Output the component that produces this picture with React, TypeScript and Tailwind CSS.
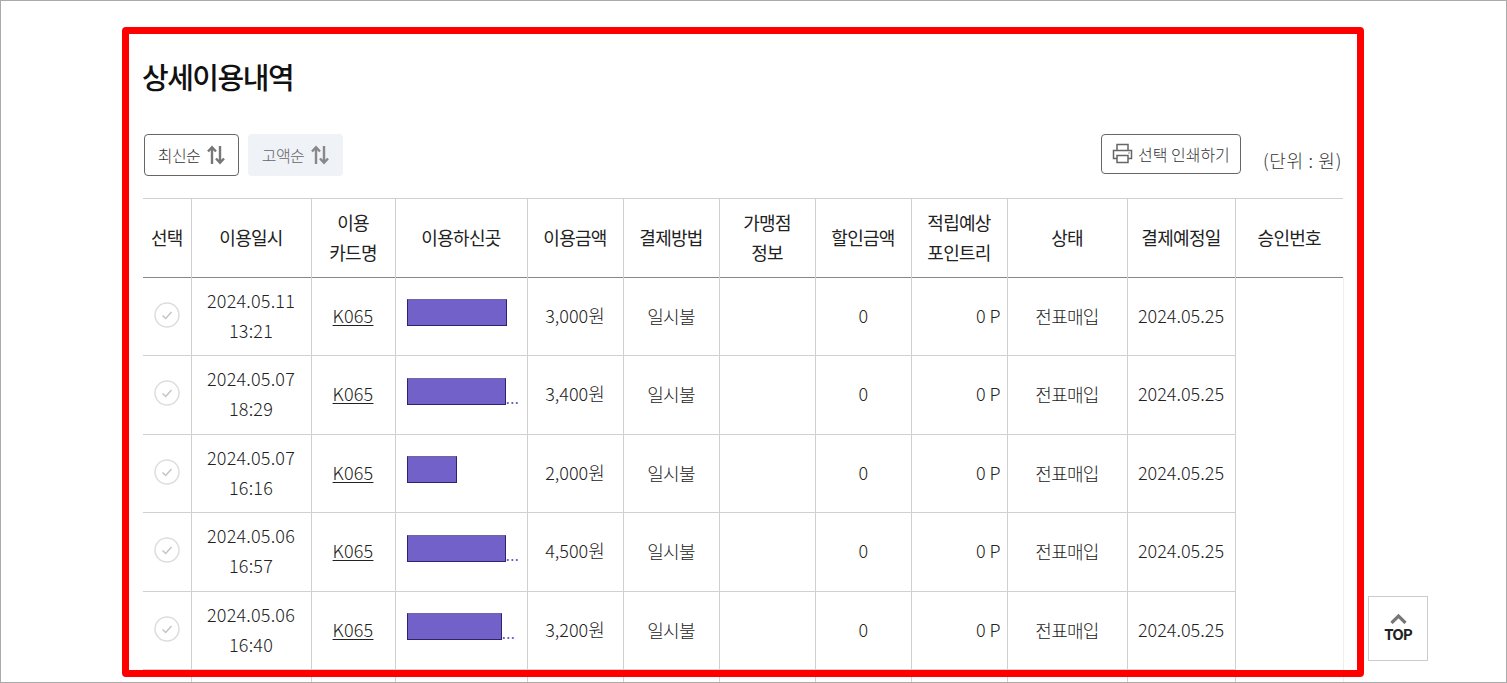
const FONT = '"Noto Sans CJK KR", "Noto Sans", sans-serif';

const columns = [48, 120, 84, 132, 96, 96, 96, 96, 96, 120, 108, 108];

const headers: string[][] = [
  ["선택"],
  ["이용일시"],
  ["이용", "카드명"],
  ["이용하신곳"],
  ["이용금액"],
  ["결제방법"],
  ["가맹점", "정보"],
  ["할인금액"],
  ["적립예상", "포인트리"],
  ["상태"],
  ["결제예정일"],
  ["승인번호"],
];

const rows = [
  { date: "2024.05.11", time: "13:21", bar: 100, dots: false, amount: "3,000원", h: "h-[78px]" },
  { date: "2024.05.07", time: "18:29", bar: 99, dots: true, amount: "3,400원", h: "h-[79px]" },
  { date: "2024.05.07", time: "16:16", bar: 50, dots: false, amount: "2,000원", h: "h-[78px]" },
  { date: "2024.05.06", time: "16:57", bar: 99, dots: true, amount: "4,500원", h: "h-[79px]" },
  { date: "2024.05.06", time: "16:40", bar: 95, dots: true, amount: "3,200원", h: "h-[78px]" },
];

function SortIcon() {
  return (
    <svg width="18" height="20" viewBox="0 0 18 20" fill="none" stroke="currentColor" strokeWidth="2.4" className="block">
      <path d="M5 19V2.5M1 6.5L5 2.2l4 4.3" />
      <path d="M13 1v16.5M9 13.5l4 4.3 4-4.3" />
    </svg>
  );
}

function PrintIcon() {
  return (
    <svg width="21" height="21" viewBox="0 0 21 21" fill="none" stroke="#666" strokeWidth="1.5">
      <path d="M5 7V1.5h11V7" />
      <path d="M5 15.5H1.5V7.5h18v8H16" />
      <rect x="5" y="12.5" width="11" height="7" />
      <path d="M16.5 10h1" />
    </svg>
  );
}

function CheckCircle() {
  return (
    <svg width="26" height="26" viewBox="0 0 26 26" fill="none" className="mx-auto block">
      <circle cx="13" cy="13" r="12" stroke="#dddddd" strokeWidth="1.5" />
      <path d="M8.5 13.5l3.2 3 5.8-6.5" stroke="#c4c4c4" strokeWidth="1.5" />
    </svg>
  );
}

export default function App() {
  return (
    <div
      className="relative h-[683px] w-full overflow-hidden border border-[#aaaaaa] bg-white text-[#222222]"
      style={{ fontFamily: FONT }}
    >
      <div className="ml-[142px] w-[1200px]">
        <h2 className="-ml-px pt-[53px] text-[29px] leading-[44px] font-medium tracking-[-1.5px] text-[#111111]">상세이용내역</h2>

        <div className="mt-[36px] flex h-[64px] items-start">
          <button className="ml-px flex h-[42px] w-[95px] items-center justify-center gap-[7px] rounded-[4px] border border-[#666666] pb-px text-[16px] font-light tracking-[-0.5px] text-[#333333]">
            최신순
            <span className="text-[#777777]">
              <SortIcon />
            </span>
          </button>
          <button className="ml-[9px] flex h-[42px] w-[95px] items-center justify-center gap-[7px] rounded-[4px] bg-[#eff2f7] pb-px text-[16px] font-light tracking-[-0.5px] text-[#666666]">
            고액순
            <span className="text-[#888888]">
              <SortIcon />
            </span>
          </button>
          <button className="ml-auto flex h-[40px] w-[140px] items-center justify-center gap-[5px] rounded-[4px] border border-[#666666] pb-px text-[16px] font-light text-[#333333]">
            <PrintIcon />
            선택 인쇄하기
          </button>
          <span className="mt-[12px] ml-[22px] pr-px text-[18px] leading-[28px] font-light tracking-[0.7px] text-[#333333]">
            (단위 : 원)
          </span>
        </div>

        <table className="w-[1200px] table-fixed border-collapse text-center text-[18px] leading-[30px] font-light tracking-[-0.7px] text-[#222222]">
          <colgroup>
            {columns.map((w, i) => (
              <col key={i} style={{ width: w }} />
            ))}
          </colgroup>
          <thead>
            <tr className="h-[79px] border-y border-t-[#d0d0d0] border-b-[#888888]">
              {headers.map((lines, i) => (
                <th
                  key={i}
                  className={`p-0 pb-[2px] font-normal ${i < 11 ? "border-r border-[#d0d0d0]" : ""}`}
                >
                  {lines.map((l) => (
                    <div key={l}>{l}</div>
                  ))}
                </th>
              ))}
            </tr>
          </thead>
          <tbody>
            {rows.map((r, i) => (
              <tr key={i} className={`${r.h} border-b border-[#d0d0d0]`}>
                <td className="border-r border-[#d0d0d0] p-0 pb-[4px]">
                  <CheckCircle />
                </td>
                <td className="border-r border-[#d0d0d0] p-0 pb-[4px] tracking-[0.2px]">
                  <div>{r.date}</div>
                  <div>{r.time}</div>
                </td>
                <td className="border-r border-[#d0d0d0] p-0 pb-[4px] tracking-[0.2px]">
                  <span className="underline underline-offset-2">K065</span>
                </td>
                <td className="border-r border-[#d0d0d0] p-0 pb-[8px] pl-[11px] text-left">
                  <div className="flex items-end">
                    <div
                      className="h-[27px] border border-[#2c2470] border-t-[#6f66a8] bg-[#7261c8]"
                      style={{ width: r.bar }}
                    />
                    {r.dots && <span className="pb-[2px] text-[18px] leading-[14px] tracking-normal text-[#5a4cc0]">...</span>}
                  </div>
                </td>
                <td className="border-r border-[#d0d0d0] p-0 pb-[4px] tracking-normal">{r.amount}</td>
                <td className="border-r border-[#d0d0d0] p-0 pb-[2px]">일시불</td>
                <td className="border-r border-[#d0d0d0] p-0" />
                <td className="border-r border-[#d0d0d0] p-0 pb-[4px]">0</td>
                <td className="border-r border-[#d0d0d0] p-0 pr-[6px] pb-[4px] text-right tracking-normal">0 P</td>
                <td className="border-r border-[#d0d0d0] p-0 pb-[2px]">전표매입</td>
                <td className="border-r border-[#d0d0d0] p-0 pb-[4px] tracking-normal">2024.05.25</td>
                {i === 0 && <td rowSpan={rows.length + 1} className="border-r border-b-0 border-[#eeeeee] bg-white p-0" />}
              </tr>
            ))}
            {/* next row: only its cell lines show before the page ends */}
            <tr className="h-[79px]">
              {columns.slice(0, 11).map((_, i) => (
                <td key={i} className="border-r border-[#d0d0d0] p-0" />
              ))}
            </tr>
          </tbody>
        </table>
      </div>

      {/* red annotation frame drawn over the page */}
      <div className="pointer-events-none absolute top-[26px] left-[121px] h-[650px] w-[1242px] rounded-[4px] border-[7px] border-[#ff0000]" />

      {/* scroll-to-top button */}
      <button className="absolute top-[595px] left-[1367px] flex h-[65px] w-[60px] flex-col items-center justify-center border border-[#cccccc] bg-white pb-[3px]">
        <svg width="17" height="11" viewBox="0 0 17 11" fill="none" stroke="#777777" strokeWidth="3.2">
          <path d="M1.5 10L8.5 3l7 7" />
        </svg>
        <span className="mt-[1px] text-[15px] leading-[17px] font-bold tracking-[-1px] text-[#222222]">TOP</span>
      </button>
    </div>
  );
}
